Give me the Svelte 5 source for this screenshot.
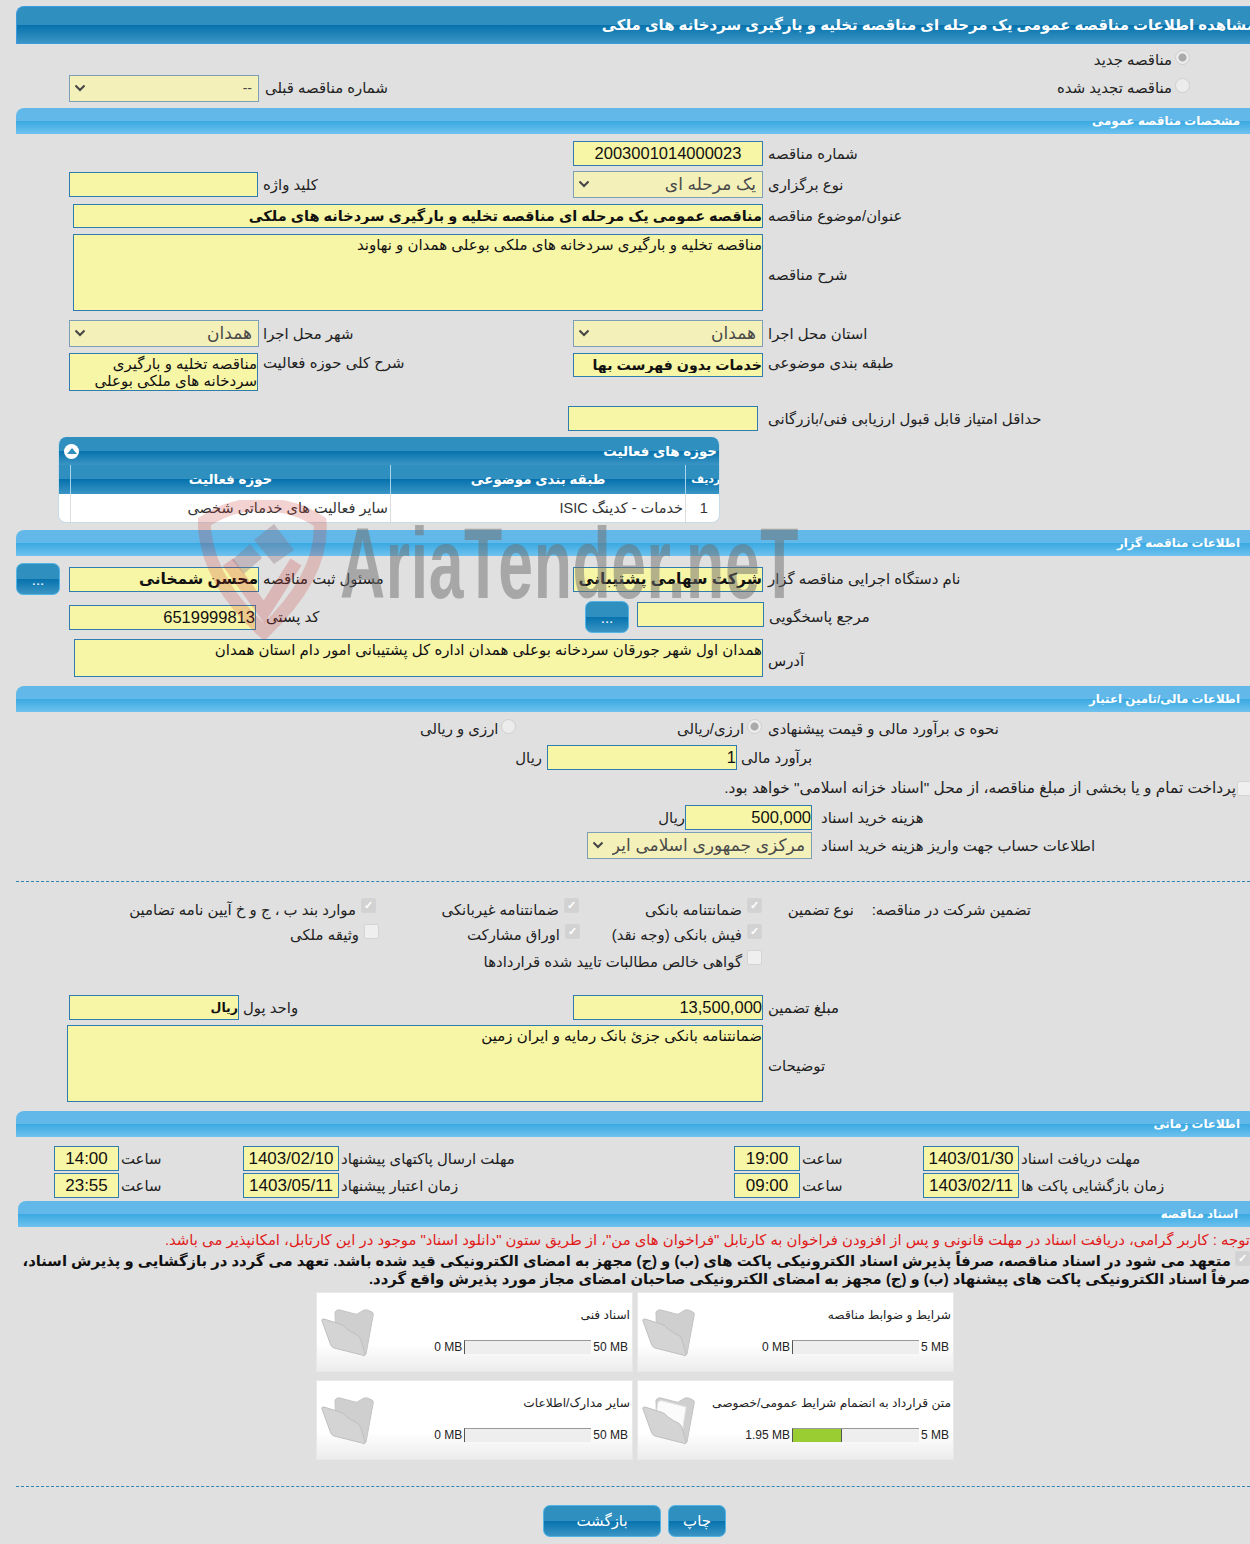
<script>
	const activityRows = [
		{ id: '1', category: 'خدمات - کدینگ ISIC', field: 'سایر فعالیت های خدماتی شخصی' }
	];

	const files = [
		{ name: 'شرایط و ضوابط مناقصه', used: '0 MB', max: '5 MB', pct: 0, full: false },
		{ name: 'اسناد فنی', used: '0 MB', max: '50 MB', pct: 0, full: false },
		{ name: 'متن قرارداد به انضمام شرایط عمومی/خصوصی', used: '1.95 MB', max: '5 MB', pct: 39, full: true },
		{ name: 'سایر مدارک/اطلاعات', used: '0 MB', max: '50 MB', pct: 0, full: false }
	];
</script>

{#snippet chevron()}
	<svg class="chevron" width="12" height="8" viewBox="0 0 12 8">
		<path d="M1.5 1.5 L6 6 L10.5 1.5" fill="none" stroke="#444" stroke-width="2" />
	</svg>
{/snippet}

{#snippet section(title, cls = '')}
	<div class="section-bar {cls}"><span>{title}</span></div>
{/snippet}

{#snippet check(checked, label)}
	<label class="check">
		<input type="checkbox" {checked} disabled />
		<span>{label}</span>
	</label>
{/snippet}

<div class="page">
	<div class="title-bar"><h1>مشاهده اطلاعات مناقصه عمومی یک مرحله ای مناقصه تخلیه و بارگیری سردخانه های ملکی</h1></div>

	<div class="intro">
		<div class="intro-left">
			<div class="select w190">
				<select class="dim" disabled dir="rtl"><option>--</option></select>
				{@render chevron()}
			</div>
			<span class="lbl">شماره مناقصه قبلی</span>
		</div>
		<div class="intro-right">
			<label class="radio"><input type="radio" name="kind" checked disabled /><span>مناقصه جدید</span></label>
			<label class="radio"><input type="radio" name="kind" disabled /><span>مناقصه تجدید شده</span></label>
		</div>
	</div>

	{@render section('مشخصات مناقصه عمومی')}

	<div class="spec">
		<div class="row r-number">
			<input class="field c4 num mid" dir="rtl" readonly value="2003001014000023" />
			<span class="lbl c5">شماره مناقصه</span>
		</div>
		<div class="row r-type">
			<input class="field c2 key" readonly />
			<span class="lbl c3">کلید واژه</span>
			<div class="select c4">
				<select disabled dir="rtl"><option>یک مرحله ای</option></select>
				{@render chevron()}
			</div>
			<span class="lbl c5">نوع برگزاری</span>
		</div>
		<div class="row r-title">
			<input class="field wide strong" dir="rtl" readonly value="مناقصه عمومی یک مرحله ای مناقصه تخلیه و بارگیری سردخانه های ملکی" />
			<span class="lbl c5">عنوان/موضوع مناقصه</span>
		</div>
		<div class="row r-desc">
			<textarea class="field wide" dir="rtl" readonly>مناقصه تخلیه و بارگیری سردخانه های ملکی بوعلی همدان و نهاوند</textarea>
			<span class="lbl c5">شرح مناقصه</span>
		</div>
		<div class="row r-place">
			<div class="select c2">
				<select disabled dir="rtl"><option>همدان</option></select>
				{@render chevron()}
			</div>
			<span class="lbl c3">شهر محل اجرا</span>
			<div class="select c4">
				<select disabled dir="rtl"><option>همدان</option></select>
				{@render chevron()}
			</div>
			<span class="lbl c5">استان محل اجرا</span>
		</div>
		<div class="row r-class">
			<textarea class="field c2 tight" dir="rtl" readonly>مناقصه تخلیه و بارگیری سردخانه های ملکی بوعلی</textarea>
			<span class="lbl c3 top">شرح کلی حوزه فعالیت</span>
			<input class="field c4 strong short" dir="rtl" readonly value="خدمات بدون فهرست بها" />
			<span class="lbl c5 top">طبقه بندی موضوعی</span>
		</div>
		<div class="row r-score">
			<input class="field score" readonly />
			<span class="lbl c5">حداقل امتیاز قابل قبول ارزیابی فنی/بازرگانی</span>
		</div>
	</div>

	<div class="activity">
		<div class="activity-title">
			<span class="collapse"><svg width="10" height="6" viewBox="0 0 10 6"><path d="M5 0 L10 6 L0 6 Z" fill="#2f8fbf" /></svg></span>
			<strong>حوزه های فعالیت</strong>
		</div>
		<table dir="rtl">
			<thead>
				<tr>
					<th class="col-id">ردیف</th>
					<th class="col-cat">طبقه بندی موضوعی</th>
					<th class="col-field">حوزه فعالیت</th>
					<th class="col-end"></th>
				</tr>
			</thead>
			<tbody>
				{#each activityRows as row}
					<tr>
						<td class="center">{row.id}</td>
						<td>{row.category}</td>
						<td>{row.field}</td>
						<td></td>
					</tr>
				{/each}
			</tbody>
		</table>
	</div>

	{@render section('اطلاعات مناقصه گزار')}

	<div class="org">
		<div class="row r-org">
			<button class="btn dots" type="button">...</button>
			<input class="field c2 strong big" dir="rtl" readonly value="محسن شمخانی" />
			<span class="lbl c3">مسئول ثبت مناقصه</span>
			<input class="field c4 strong big" dir="rtl" readonly value="شرکت سهامی پشتیبانی امور دام" />
			<span class="lbl c5">نام دستگاه اجرایی مناقصه گزار</span>
		</div>
		<div class="row r-ref">
			<input class="field postal num" dir="rtl" readonly value="6519999813" />
			<span class="lbl postal-label">کد پستی</span>
			<button class="btn dots ref-btn" type="button">...</button>
			<input class="field ref" readonly />
			<span class="lbl c5">مرجع پاسخگویی</span>
		</div>
		<div class="row r-address">
			<textarea class="field address" dir="rtl" readonly>همدان اول شهر جورقان سردخانه بوعلی همدان اداره کل پشتیبانی امور دام استان همدان</textarea>
			<span class="lbl c5">آدرس</span>
		</div>
	</div>

	{@render section('اطلاعات مالی/تامین اعتبار')}

	<div class="finance">
		<div class="fin-row f-mode">
			<label class="radio"><input type="radio" name="cur" disabled /><span>ارزی و ریالی</span></label>
			<label class="radio"><input type="radio" name="cur" checked disabled /><span>ارزی/ریالی</span></label>
			<span class="lbl">نحوه ی برآورد مالی و قیمت پیشنهادی</span>
		</div>
		<div class="fin-row f-budget">
			<span class="unit">ریال</span>
			<input class="field num" dir="rtl" readonly value="1" />
			<span class="lbl">برآورد مالی</span>
		</div>
		<div class="f-treasury">
			<input type="checkbox" disabled />
			<span>پرداخت تمام و یا بخشی از مبلغ مناقصه، از محل "اسناد خزانه اسلامی" خواهد بود.</span>
		</div>
		<div class="fin-row f-fee">
			<span class="unit">ریال</span>
			<input class="field num" dir="rtl" readonly value="500,000" />
			<span class="lbl">هزینه خرید اسناد</span>
		</div>
		<div class="fin-row f-account">
			<div class="select">
				<select disabled dir="rtl"><option>مرکزی جمهوری اسلامی ایران</option></select>
				{@render chevron()}
			</div>
			<span class="lbl">اطلاعات حساب جهت واریز هزینه خرید اسناد</span>
		</div>
	</div>

	<hr class="dash" />

	<div class="guarantee">
		<div class="g-row g1">
			<span class="g-text">تضمین شرکت در مناقصه:</span>
			<span class="g-text">نوع تضمین</span>
			{@render check(true, 'ضمانتنامه بانکی')}
			{@render check(true, 'ضمانتنامه غیربانکی')}
			{@render check(true, 'موارد بند ب ، ج و خ آیین نامه تضامین')}
		</div>
		<div class="g-row g2">
			<span></span>
			<span></span>
			{@render check(true, 'فیش بانکی (وجه نقد)')}
			{@render check(true, 'اوراق مشارکت')}
			{@render check(false, 'وثیقه ملکی')}
		</div>
		<div class="g-row g3">
			<span></span>
			<span></span>
			{@render check(false, 'گواهی خالص مطالبات تایید شده قراردادها')}
		</div>
	</div>

	<div class="amounts">
		<div class="row r-amount">
			<input class="field currency strong" dir="rtl" readonly value="ریال" />
			<span class="lbl currency-label">واحد پول</span>
			<input class="field c4 num" dir="rtl" readonly value="13,500,000" />
			<span class="lbl c5">مبلغ تضمین</span>
		</div>
		<div class="row r-notes">
			<textarea class="field notes" dir="rtl" readonly>ضمانتنامه بانکی جزئ بانک رمایه و ایران زمین</textarea>
			<span class="lbl c5">توضیحات</span>
		</div>
	</div>

	{@render section('اطلاعات زمانی')}

	<div class="times">
		<div class="time-row">
			<input class="field t1 num" readonly value="14:00" />
			<span class="lbl t2">ساعت</span>
			<input class="field t3 num" readonly value="1403/02/10" />
			<span class="lbl t4">مهلت ارسال پاکتهای پیشنهاد</span>
			<input class="field t5 num" readonly value="19:00" />
			<span class="lbl t6">ساعت</span>
			<input class="field t7 num" readonly value="1403/01/30" />
			<span class="lbl t8">مهلت دریافت اسناد</span>
		</div>
		<div class="time-row">
			<input class="field t1 num" readonly value="23:55" />
			<span class="lbl t2">ساعت</span>
			<input class="field t3 num" readonly value="1403/05/11" />
			<span class="lbl t4">زمان اعتبار پیشنهاد</span>
			<input class="field t5 num" readonly value="09:00" />
			<span class="lbl t6">ساعت</span>
			<input class="field t7 num" readonly value="1403/02/11" />
			<span class="lbl t8">زمان بازگشایی پاکت ها</span>
		</div>
	</div>

	{@render section('اسناد مناقصه', 'docs-bar')}

	<p class="notice">توجه : کاربر گرامی، دریافت اسناد در مهلت قانونی و پس از افزودن فراخوان به کارتابل "فراخوان های من"، از طریق ستون "دانلود اسناد" موجود در این کارتابل، امکانپذیر می باشد.</p>
	<p class="pledge">
		<input type="checkbox" checked disabled />
		متعهد می شود در اسناد مناقصه، صرفاً پذیرش اسناد الکترونیکی پاکت های (ب) و (ج) مجهز به امضای الکترونیکی قید شده باشد. تعهد می گردد در بازگشایی و پذیرش اسناد، صرفاً اسناد الکترونیکی پاکت های پیشنهاد (ب) و (ج) مجهز به امضای الکترونیکی صاحبان امضای مجاز مورد پذیرش واقع گردد.
	</p>

	<div class="files">
		{#each files as file}
			<div class="file-card">
				<svg class="folder" width="56" height="50" viewBox="0 0 56 50">
					<path d="M15 5 Q17 2 20 3 L35 7 Q37 8 39 6 L44 3 Q47 2 52 5 Q54 6 53 9 L46 47 Q45 49 43 48 L16 38 Z" fill="#cfcfcf" stroke="#c4c4c4" />
					{#if file.full}
						<path d="M17 7 Q19 5 22 6 L45 12 L41 38 L14 28 Z" fill="#fbfbfb" stroke="#e4e4e4" />
					{/if}
					<path d="M2 14 Q1 12 4 12 L20 17 Q24 18 27 22 Q33 26 37 28 Q40 29 41 33 L45 47 Q45 50 42 48 L14 41 Q11 40 10 36 Z" fill="#d4d4d4" stroke="#bfbfbf" />
				</svg>
				<div class="file-main">
					<div class="file-name">{file.name}</div>
					<div class="file-usage">
						<span dir="ltr">{file.max}</span>
						<div class="bar"><div class="bar-fill" class:on={file.full} style="width: {file.pct}%"></div></div>
						<span dir="ltr">{file.used}</span>
					</div>
				</div>
			</div>
		{/each}
	</div>

	<hr class="dash bottom" />

	<div class="actions">
		<button class="btn back" type="button">بازگشت</button>
		<button class="btn print" type="button">چاپ</button>
	</div>

	<div class="watermark" aria-hidden="true">
		<svg class="shield" width="130" height="140" viewBox="0 0 130 140">
			<path d="M6 22 Q35 3 64 5 Q95 4 122 22 Q126 75 66 132 Q8 80 6 22 Z" fill="none" stroke="#c83232" stroke-opacity="0.22" stroke-width="13" />
			<path d="M30 62 L66 112 L98 62" fill="none" stroke="#c83232" stroke-opacity="0.24" stroke-width="13" />
			<path d="M34 60 L52 44 L64 58 L46 74 Z M56 40 L76 24 L96 50 L76 64 Z" fill="#8a6f80" fill-opacity="0.35" />
		</svg>
		<span class="wm-text">AriaTender.neT</span>
	</div>
</div>

<style>
	:global(body) {
		margin: 0;
		background: #e0e0e0;
	}
	.page {
		position: relative;
		width: 1250px;
		height: 1544px;
		padding-top: 6px;
		box-sizing: border-box;
		overflow: hidden;
		background: #e0e0e0;
		color: #222;
		font-family: "Liberation Sans", "DejaVu Sans", sans-serif;
		font-size: 14.9px;
	}
	.title-bar {
		height: 38px;
		margin-left: 16px;
		box-sizing: border-box;
		border: 1px solid #3a9ae0;
		border-right: none;
		border-radius: 8px 0 0 0;
		background: linear-gradient(#2f8fbf 0, #2f8fbf 50%, #0672ad 50%, #3b95c4 100%);
		overflow: hidden;
		display: flex;
		justify-content: flex-end;
	}
	.title-bar h1 {
		flex: none;
		margin: 0 -6px 0 0;
		direction: rtl;
		font-size: 14.9px;
		line-height: 36px;
		color: #fff;
		white-space: nowrap;
	}
	.section-bar {
		height: 26px;
		margin-left: 16px;
		box-sizing: border-box;
		border-radius: 8px 0 0 0;
		background: linear-gradient(#62b9e9 0, #62b9e9 50%, #3aa9e2 50%, #6ec2ee 100%);
		display: flex;
		align-items: center;
		padding-right: 10px;
		color: #fff;
		font-size: 11.8px;
		font-weight: bold;
		direction: rtl;
	}
	.section-bar span {
		margin-left: auto;
	}
	.docs-bar {
		margin-left: 18px;
		padding-right: 12px;
	}
	.intro {
		height: 64px;
		display: flex;
		justify-content: space-between;
		padding-left: 69px;
	}
	.intro-left {
		display: flex;
		align-items: center;
		gap: 6px;
		margin-top: 31px;
		height: 26px;
	}
	.intro-right {
		display: flex;
		flex-direction: column;
		align-items: flex-start;
		direction: rtl;
		padding-right: 60px;
		padding-top: 5px;
		gap: 6px;
	}
	.w190 {
		width: 190px;
	}
	.radio {
		display: flex;
		align-items: center;
		gap: 3px;
		height: 22px;
		direction: rtl;
	}
	.radio input {
		appearance: none;
		width: 15px;
		height: 15px;
		margin: -5px 0 0 0;
		border: 1px solid #cfcfcf;
		border-radius: 50%;
		background: #ececec;
		box-sizing: border-box;
	}
	.radio input:checked {
		background: radial-gradient(circle, #aaa 0, #aaa 3.5px, #ececec 4.5px);
	}
	.row {
		display: grid;
		grid-template-columns: 69px 190px 314px 190px 1fr;
		align-items: center;
	}
	.c2 {
		grid-column: 2;
		grid-row: 1;
	}
	.c3 {
		grid-column: 3;
		grid-row: 1;
	}
	.c4 {
		grid-column: 4;
		grid-row: 1;
	}
	.c5 {
		grid-column: 5;
		grid-row: 1;
		padding-left: 5px;
	}
	.lbl {
		direction: rtl;
		text-align: left;
		white-space: nowrap;
		color: #222;
	}
	.c3.lbl {
		padding-left: 4px;
	}
	.field {
		display: block;
		box-sizing: border-box;
		width: 100%;
		height: 25px;
		margin: 0;
		padding: 0;
		border: 1px solid #2f7cae;
		border-radius: 0;
		background: #f7f5a6;
		color: #111;
		font-family: inherit;
		font-size: 15px;
		outline: none;
		resize: none;
	}
	.num {
		font-size: 16.5px;
	}
	.mid {
		text-align: center;
	}
	.strong {
		font-weight: bold;
		font-size: 14.5px;
	}
	.big {
		font-size: 15.5px;
	}
	.select {
		position: relative;
		height: 27px;
	}
	.select select {
		appearance: none;
		width: 100%;
		height: 100%;
		box-sizing: border-box;
		margin: 0;
		padding: 0 6px 0 24px;
		border: 1px solid #7c9fb6;
		border-radius: 0;
		background: #f3f0b9;
		color: #4a4a4a;
		font-family: inherit;
		font-size: 17px;
		opacity: 1;
	}
	.select select.dim {
		font-size: 14px;
	}
	.chevron {
		position: absolute;
		left: 5px;
		top: 9px;
		pointer-events: none;
	}
	.spec {
		padding-top: 7px;
		height: 296px;
		box-sizing: border-box;
	}
	.r-number {
		height: 24px;
	}
	.r-type {
		height: 27px;
		margin-top: 6px;
	}
	.key {
		width: 189px;
	}
	.r-title {
		height: 24px;
		margin-top: 6px;
	}
	.wide {
		grid-column: 2 / 5;
		grid-row: 1;
		margin-left: 4px;
		width: calc(100% - 4px);
		height: 100%;
	}
	.r-desc {
		height: 77px;
		margin-top: 6px;
	}
	textarea.field {
		padding: 1px 0 0;
		line-height: 17px;
		overflow: hidden;
	}
	.r-desc .lbl,
	.r-notes .lbl {
		margin-top: 4px;
	}
	.r-address .lbl {
		margin-top: 5px;
	}
	.r-place {
		height: 27px;
		margin-top: 9px;
	}
	.r-class {
		height: 38px;
		margin-top: 6px;
		align-items: start;
	}
	.tight {
		height: 38px;
		width: 189px;
	}
	.short {
		height: 24px;
		font-size: 14.2px;
	}
	.top {
		margin-top: 1px;
	}
	.r-score {
		height: 24px;
		margin-top: 15px;
	}
	.score {
		grid-column: 4;
		grid-row: 1;
		margin-left: -5px;
	}
	.activity {
		width: 662px;
		height: 86px;
		margin: 7px 0 7px 58px;
		box-sizing: border-box;
		border-radius: 8px;
		overflow: hidden;
		background: #fff;
		border: 1px solid #c7dbe6;
		border-top: none;
	}
	.activity-title {
		height: 28px;
		padding: 0 2px 0 5px;
		display: flex;
		align-items: center;
		justify-content: space-between;
		background: linear-gradient(#2f8fbf 0, #2f8fbf 50%, #0672ad 50%, #3b95c4 100%);
		color: #fff;
		font-size: 13.4px;
		direction: ltr;
	}
	.activity-title strong {
		direction: rtl;
	}
	.collapse {
		width: 15px;
		height: 15px;
		border-radius: 50%;
		background: #fff;
		display: flex;
		align-items: center;
		justify-content: center;
	}
	table {
		width: 660px;
		table-layout: fixed;
		border-collapse: collapse;
	}
	th {
		height: 29px;
		padding: 0;
		border-right: 1px solid #a8d4ec;
		background: linear-gradient(#2f8fbf 0, #2f8fbf 50%, #0672ad 50%, #3b95c4 100%);
		color: #fff;
		font-size: 13.4px;
	}
	th:first-child {
		border-right: none;
	}
	.col-id {
		width: 36px;
		font-size: 11px;
		white-space: nowrap;
		padding-left: 4px;
		box-sizing: border-box;
	}
	.col-cat {
		width: 294px;
	}
	.col-field {
		width: 319px;
	}
	.col-end {
		width: 11px;
	}
	td {
		height: 28px;
		padding: 0 2px;
		border-right: 1px solid #ddd;
		color: #333;
		font-size: 14.5px;
		white-space: nowrap;
	}
	td:first-child {
		border-right: none;
	}
	.center {
		text-align: center;
	}
	.org {
		height: 130px;
		box-sizing: border-box;
		padding-top: 7px;
		position: relative;
	}
	.r-org {
		height: 32px;
		position: relative;
	}
	.btn {
		border: 1px solid #50b4e6;
		border-radius: 7px;
		background: linear-gradient(#2f8fbf 0, #2f8fbf 50%, #0672ad 50%, #3b95c4 100%);
		color: #fff;
		font-family: inherit;
		font-size: 15px;
		padding: 0;
	}
	.dots {
		grid-column: 1;
		grid-row: 1;
		width: 44px;
		height: 32px;
		margin-left: 16px;
	}
	.r-ref {
		height: 32px;
		margin-top: 6px;
		grid-template-columns: 69px 187px 329px 44px 8px 127px 1fr;
	}
	.postal {
		grid-column: 2;
		grid-row: 1;
	}
	.postal-label {
		grid-column: 3;
		grid-row: 1;
		padding-left: 10px;
	}
	.ref-btn {
		grid-column: 4;
		grid-row: 1;
		margin: 0;
	}
	.ref {
		grid-column: 6;
		grid-row: 1;
		margin-top: -5px;
	}
	.r-ref .c5 {
		grid-column: 7;
		padding-left: 5px;
	}
	.r-address {
		height: 38px;
		margin-top: 6px;
	}
	.address {
		grid-column: 2 / 5;
		grid-row: 1;
		margin-left: 5px;
		width: calc(100% - 5px);
		height: 38px;
	}
	.finance {
		height: 169px;
		box-sizing: border-box;
		padding-top: 6px;
		position: relative;
	}
	.fin-row {
		display: flex;
		align-items: center;
	}
	.f-mode {
		height: 22px;
		padding-left: 420px;
	}
	.f-mode .radio:first-child {
		width: 257px;
		justify-content: flex-end;
		flex-direction: row-reverse;
		direction: ltr;
	}
	.f-mode .radio:nth-child(2) {
		width: 91px;
		flex-direction: row-reverse;
		direction: ltr;
		justify-content: flex-end;
	}
	.f-budget {
		height: 25px;
		margin-top: 5px;
		padding-left: 518px;
	}
	.unit {
		direction: rtl;
		width: 29px;
		box-sizing: border-box;
		padding-right: 5px;
		white-space: nowrap;
	}
	.f-budget .field {
		width: 190px;
	}
	.f-budget .lbl {
		padding-left: 4px;
	}
	.f-treasury {
		height: 24px;
		margin-top: 6px;
		display: flex;
		direction: rtl;
		align-items: center;
		gap: 1px;
		margin-right: -2px;
		font-size: 15.4px;
	}
	.f-treasury input,
	.check input,
	.pledge input {
		appearance: none;
		width: 15px;
		height: 15px;
		margin: 0;
		flex: none;
		border: 1px solid #d4d4d4;
		border-radius: 2px;
		background: #efefef;
		box-sizing: border-box;
	}
	.check input:checked,
	.pledge input:checked {
		background: #d2d2d2;
		position: relative;
	}
	.check input:checked::after,
	.pledge input:checked::after {
		content: '✓';
		position: absolute;
		inset: 0;
		text-align: center;
		font-size: 11px;
		line-height: 13px;
		color: #fff;
		font-weight: bold;
	}
	.f-fee {
		height: 25px;
		margin-top: 5px;
		padding-left: 661px;
	}
	.f-fee .unit {
		width: 24px;
		padding-right: 0;
	}
	.f-fee .field {
		width: 127px;
	}
	.f-fee .lbl {
		padding-left: 9px;
	}
	.f-account {
		height: 27px;
		margin-top: 2px;
		padding-left: 587px;
	}
	.f-account .select {
		width: 225px;
	}
	.f-account .lbl {
		padding-left: 9px;
	}
	.dash {
		height: 0;
		margin: 0 0 0 16px;
		border: none;
		border-top: 1px dashed #2f86b5;
	}
	.guarantee {
		height: 113px;
		box-sizing: border-box;
		padding-top: 16px;
		width: 901px;
		margin-left: 130px;
		direction: rtl;
	}
	.g-row {
		display: grid;
		align-items: start;
		height: 26px;
	}
	.g1 {
		grid-template-columns: 177px 92px 183px 203px 1fr;
	}
	.g2 {
		grid-template-columns: 177px 92px 182px 201px 1fr;
	}
	.g3 {
		grid-template-columns: 177px 92px 1fr;
	}
	.g-text {
		white-space: nowrap;
		padding-top: 3px;
	}
	.check {
		display: flex;
		gap: 5px;
		white-space: nowrap;
	}
	.check span {
		padding-top: 3px;
	}
	.g2 .check span {
		padding-top: 2px;
	}
	.r-amount {
		height: 24px;
	}
	.currency {
		grid-column: 2;
		grid-row: 1;
		width: 170px;
		font-size: 12.5px;
	}
	.currency-label {
		grid-column: 2 / 4;
		grid-row: 1;
		padding-left: 174px;
	}
	.r-notes {
		height: 77px;
		margin-top: 6px;
	}
	.notes {
		grid-column: 1 / 5;
		grid-row: 1;
		margin-left: 67px;
		width: calc(100% - 67px);
		height: 77px;
	}
	.amounts {
		height: 116px;
	}
	.times {
		height: 64px;
		box-sizing: border-box;
		padding-top: 9px;
	}
	.time-row {
		display: grid;
		grid-template-columns: 54px 65px 124px 96px 395px 66px 123px 96px 1fr;
		align-items: center;
		height: 25px;
		margin-bottom: 2px;
	}
	.time-row .field {
		text-align: center;
		font-size: 17px;
	}
	.time-row .lbl {
		padding-left: 2px;
	}
	.t1 {
		grid-column: 2;
	}
	.t2 {
		grid-column: 3;
	}
	.t3 {
		grid-column: 4;
	}
	.t4 {
		grid-column: 5;
	}
	.t5 {
		grid-column: 6;
	}
	.t6 {
		grid-column: 7;
	}
	.t7 {
		grid-column: 8;
	}
	.t8 {
		grid-column: 9;
	}
	.notice {
		margin: 5px 0 0 0;
		direction: rtl;
		white-space: nowrap;
		font-size: 14.85px;
		line-height: 16px;
		color: #e01b1b;
		display: flex;
		justify-content: flex-start;
	}
	.pledge {
		margin: 3px 0 0 0;
		direction: rtl;
		color: #111;
		font-size: 14.8px;
		font-weight: bold;
		line-height: 18px;
	}
	.files {
		display: grid;
		grid-template-columns: 317px 317px;
		grid-auto-rows: 80px;
		gap: 8px 4px;
		margin: 4px 0 0 316px;
		width: 638px;
		direction: rtl;
	}
	.file-card {
		display: flex;
		box-sizing: border-box;
		background: linear-gradient(#fff 0, #fff 65%, #ececec 100%);
		border: 1px solid #e8e8e8;
		direction: ltr;
	}
	.folder {
		flex: none;
		margin: 14px 0 0 3px;
	}
	.file-main {
		flex: 1;
		display: flex;
		flex-direction: column;
		align-items: flex-end;
	}
	.file-name {
		direction: rtl;
		margin: 14px 2px 0 0;
		font-size: 12.2px;
		line-height: 16px;
		color: #222;
		white-space: nowrap;
	}
	.file-usage {
		display: flex;
		direction: rtl;
		align-items: center;
		gap: 2px;
		margin: 17px 4px 0 0;
		font-size: 12px;
		line-height: 14px;
		color: #222;
	}
	.bar {
		width: 127px;
		height: 14px;
		box-sizing: border-box;
		background: #eee;
		border-top: 1px solid #999;
		border-left: 1px solid #555;
		display: flex;
		justify-content: flex-start;
		direction: ltr;
	}
	.bar-fill.on {
		background: #9acd32;
		border-right: 1px solid #555;
		box-sizing: border-box;
	}
	.bottom {
		margin-top: 26px;
	}
	.actions {
		display: flex;
		gap: 7px;
		padding: 18px 0 0 543px;
	}
	.back {
		width: 118px;
		height: 32px;
	}
	.print {
		width: 58px;
		height: 32px;
	}
	.watermark {
		position: absolute;
		left: 198px;
		top: 500px;
		width: 610px;
		height: 142px;
		pointer-events: none;
	}
	.shield {
		position: absolute;
		left: 0;
		top: 0;
	}
	.wm-text {
		position: absolute;
		left: 142px;
		top: 8px;
		font-family: "Liberation Sans Narrow", "Liberation Sans", sans-serif;
		font-weight: bold;
		font-size: 100px;
		line-height: 110px;
		letter-spacing: 1px;
		color: rgba(110, 110, 110, 0.5);
		white-space: nowrap;
		transform-origin: left top;
		transform: scaleX(0.625);
	}
</style>
